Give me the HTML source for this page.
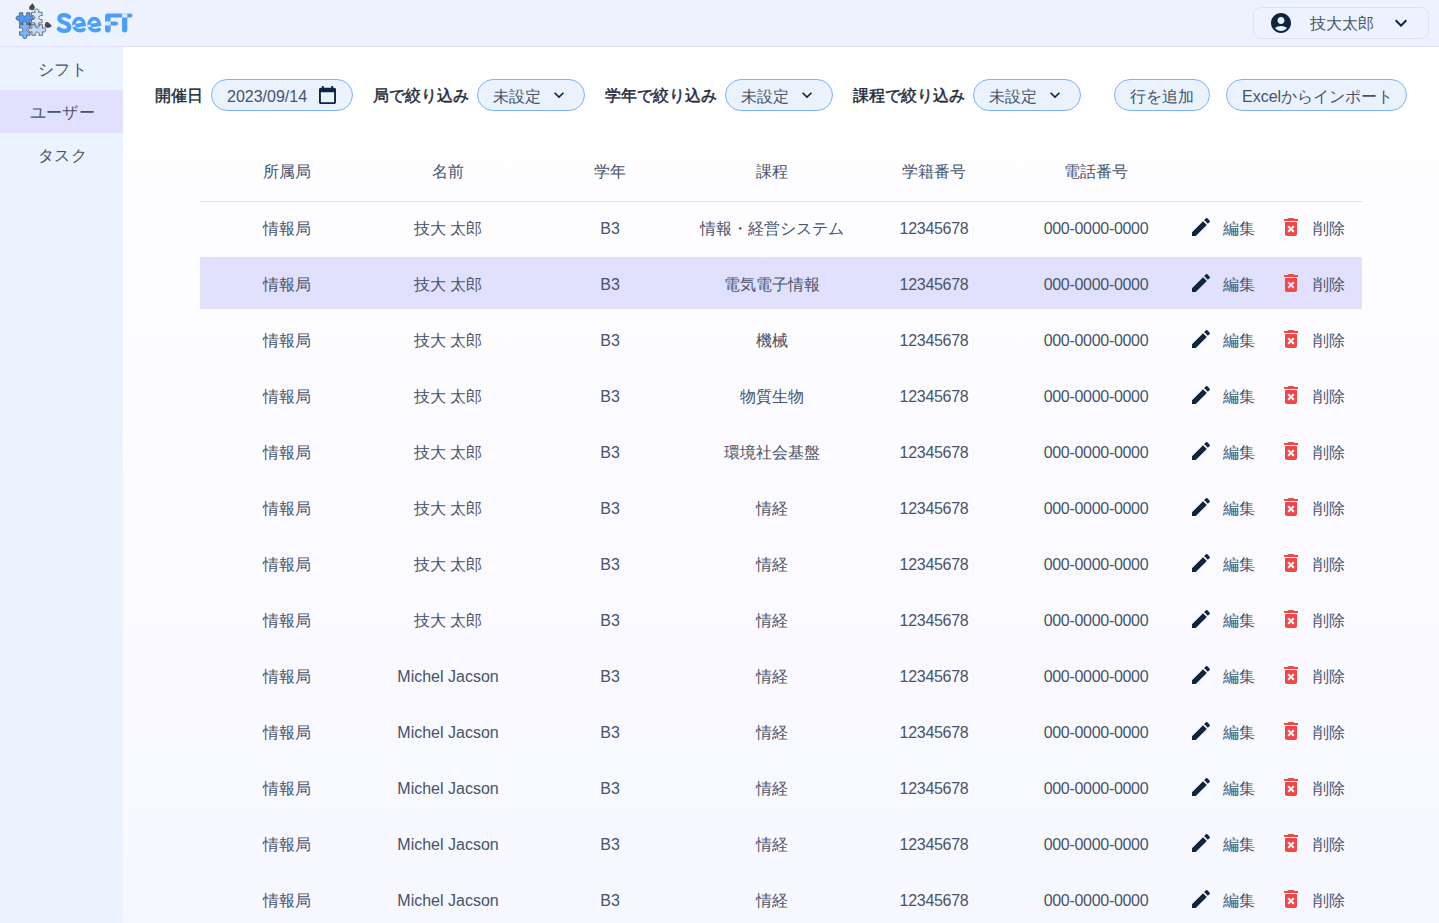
<!DOCTYPE html>
<html lang="ja"><head><meta charset="utf-8">
<style>
*{box-sizing:border-box;margin:0;padding:0}
html,body{width:1439px;height:923px;overflow:hidden}
body{font-family:"Liberation Sans",sans-serif;color:#46536a;background:#fff;position:relative}
#hdr{position:absolute;left:0;top:0;width:1439px;height:47px;background:#ecf3ff;border-bottom:1px solid #e2e0fb}
#side{position:absolute;left:0;top:47px;width:123px;height:876px;background:#ebf3ff}
.nav{position:absolute;left:0;width:123px;height:43px;text-align:center;font-size:16px;color:#46536a;letter-spacing:0.2px}
.nav span{position:absolute;left:0;width:123px;top:12px;line-height:22px;padding-left:2px}
.nav.on{background:#e1e1fd}
#main{position:absolute;left:123px;top:47px;width:1316px;height:876px;background:linear-gradient(#ffffff,#f7f7ff)}
.lab{position:absolute;top:85px;font-size:16px;font-weight:normal;-webkit-text-stroke:0.45px #1e2a3b;color:#1e2a3b;line-height:22px;white-space:nowrap}
.pill{position:absolute;top:79px;height:32px;border:1px solid #7db4f6;background:#eaf2fe;border-radius:16px;font-size:16px;color:#46536a;white-space:nowrap}
.pill span{position:absolute;top:6px;line-height:22px}
.pill svg{position:absolute}
.row{position:absolute;left:200px;width:1162px;height:52px}
.row.hl{background:#e1e1fd}
.cell{position:absolute;top:17px;width:200px;text-align:center;line-height:22px;font-size:16px;color:#46536a;white-space:nowrap}
.ic{position:absolute;top:14px}
.lbl{position:absolute;top:17px;line-height:22px;font-size:16px;color:#46536a}
#thead{position:absolute;left:200px;top:145px;width:1162px;height:57px;border-bottom:1px solid #dedcfa}
#thead .cell{top:16px}
</style></head><body>
<div id="hdr">
  <svg style="position:absolute;left:0;top:0" width="140" height="46" viewBox="0 0 140 46"><path transform="translate(24.7,18.1) rotate(0)" fill="#4a9cf8" stroke="#50555e" stroke-width="0.8" stroke-linejoin="round" d="M-5.3,-5.3 H-1.6800000000000002 A2.1,2.1 0 1 0 1.6800000000000002,-5.3 H5.3 V-1.6800000000000002 A2.1,2.1 0 1 1 5.3,1.6800000000000002 V5.3 H1.6800000000000002 A2.1,2.1 0 1 0 -1.6800000000000002,5.3 H-5.3 V1.6800000000000002 A2.1,2.1 0 1 1 -5.3,-1.6800000000000002 Z"/><path transform="translate(36.8,17.6) rotate(0)" fill="#d6e8fd" stroke="#50555e" stroke-width="0.8" stroke-linejoin="round" d="M-5.3,-5.3 H-1.6800000000000002 A2.1,2.1 0 1 1 1.6800000000000002,-5.3 H5.3 V-1.6800000000000002 A2.1,2.1 0 1 0 5.3,1.6800000000000002 V5.3 H1.6800000000000002 A2.1,2.1 0 1 1 -1.6800000000000002,5.3 H-5.3 V1.6800000000000002 A2.1,2.1 0 1 0 -5.3,-1.6800000000000002 Z"/><path transform="translate(24.8,29.9) rotate(0)" fill="#79b6fb" stroke="#50555e" stroke-width="0.8" stroke-linejoin="round" d="M-5.3,-5.3 H-1.6800000000000002 A2.1,2.1 0 1 1 1.6800000000000002,-5.3 H5.3 V-1.6800000000000002 A2.1,2.1 0 1 0 5.3,1.6800000000000002 V5.3 H1.6800000000000002 A2.1,2.1 0 1 1 -1.6800000000000002,5.3 H-5.3 V1.6800000000000002 A2.1,2.1 0 1 0 -5.3,-1.6800000000000002 Z"/><path transform="translate(37.2,30.0) rotate(0)" fill="#bddcfd" stroke="#50555e" stroke-width="0.8" stroke-linejoin="round" d="M-5.3,-5.3 H-1.6800000000000002 A2.1,2.1 0 1 0 1.6800000000000002,-5.3 H5.3 V-1.6800000000000002 A2.1,2.1 0 1 1 5.3,1.6800000000000002 V5.3 H1.6800000000000002 A2.1,2.1 0 1 0 -1.6800000000000002,5.3 H-5.3 V1.6800000000000002 A2.1,2.1 0 1 1 -5.3,-1.6800000000000002 Z"/><path fill="#4a4a4a" d="M32.5 3.2 C34.5 5.5 35.5 7.5 34.3 9.2 C33.2 10.6 30.2 10.5 29.2 8.8 C28.4 7 30.5 5 32.5 3.2Z"/><path fill="#4a4a4a" d="M51.8 26.2 C49.5 27.6 47.5 28.3 45.8 27.5 C44.3 26.6 44.3 23.4 46 22.3 C47.8 21.4 50 23.8 51.8 26.2Z"/><path fill="#4a4a4a" d="M29.5 22.2 C31 22.5 32 23.6 31.6 25 C31.2 26 29.8 26 29 25.2 C28.3 24.3 28.7 23 29.5 22.2Z"/><g fill="none" stroke="#4b9ef9" stroke-linecap="round"><path stroke-width="4.3" d="M69 16.8 C67.6 15.6 65.6 15.2 64 15.2 C61.2 15.2 59.3 16.5 59.3 18.6 C59.3 21 61.8 21.9 64.3 22.7 C67.4 23.6 69.3 24.8 69.3 27.2 C69.3 29.5 67.2 30.9 64.2 30.9 C62 30.9 60.2 30.2 58.8 28.9"/><path stroke-width="3.7" d="M74.2 25.8 L84 24.4 C83.8 20.9 81.6 18.7 79 18.7 C75.9 18.7 73.9 21.4 73.9 24.8 C73.9 28.3 76.4 30.6 79.6 30.6 C81.2 30.6 82.6 30.2 83.8 29.6"/><path stroke-width="3.7" d="M89.5 25.8 L99.3 24.4 C99.1 20.9 96.9 18.7 94.3 18.7 C91.2 18.7 89.2 21.4 89.2 24.8 C89.2 28.3 91.7 30.6 94.9 30.6 C96.5 30.6 97.9 30.2 99.1 29.6"/></g><g fill="#4b9ef9"><path d="M105 16 a2.5 2.5 0 0 1 2.5 -2.5 H122 V17.6 H110.6 V29.8 a2.6 2.6 0 0 1 -5.6 0Z"/><path d="M110 21.4 H116 a2.05 2.05 0 0 1 0 4.1 H110Z"/><path d="M122 13.5 H130.5 a2.05 2.05 0 0 1 0 4.1 H127.3 V29.8 a2.65 2.65 0 0 1 -5.3 0Z"/></g><rect x="122" y="13.5" width="5.3" height="4.1" fill="#d8e9fe"/><rect x="105" y="21.4" width="5.6" height="4.1" fill="#d8e9fe"/><rect x="72.3" y="24.7" width="3.2" height="2.2" fill="#d8e9fe" transform="rotate(-8 74 25.8)"/><rect x="87.6" y="24.7" width="3.2" height="2.2" fill="#d8e9fe" transform="rotate(-8 89.4 25.8)"/></svg>
  <div style="position:absolute;left:1253px;top:7px;width:176px;height:32px;border:1px solid #e3defb;border-radius:8px"></div>
  <svg style="position:absolute;left:1269px;top:11px" width="24" height="24" viewBox="0 0 24 24"><path fill="#0f2440" d="M12 2C6.48 2 2 6.48 2 12s4.48 10 10 10 10-4.48 10-10S17.52 2 12 2zm0 4c1.93 0 3.5 1.57 3.5 3.5S13.93 13 12 13s-3.5-1.57-3.5-3.5S10.07 6 12 6zm0 14c-2.03 0-4.43-.82-6.14-2.88C7.55 15.8 9.68 15 12 15s4.45.8 6.14 2.12C16.43 19.18 14.03 20 12 20z"/></svg>
  <span style="position:absolute;left:1310px;top:13px;font-size:16px;line-height:22px;color:#46536a">技大太郎</span>
  <svg style="position:absolute;left:1389px;top:11px" width="24" height="24" viewBox="0 0 24 24"><path fill="#0f2440" d="M16.59 8.59 12 13.17 7.41 8.59 6 10l6 6 6-6z"/></svg>
</div>
<div id="side">
  <div class="nav" style="top:0"><span>シフト</span></div>
  <div class="nav on" style="top:43px"><span>ユーザー</span></div>
  <div class="nav" style="top:86px"><span>タスク</span></div>
</div>
<div id="main"></div>
<span class="lab" style="left:155px">開催日</span>
<div class="pill" style="left:211px;width:142px"><span style="left:15px">2023/09/14</span>
  <svg style="left:106.6px;top:5.9px" width="17" height="18" viewBox="3 2 18 20" preserveAspectRatio="none"><path fill="#0f2440" d="M19 4h-1V2h-2v2H8V2H6v2H5c-1.11 0-2 .9-2 2v14c0 1.1.89 2 2 2h14c1.1 0 2-.9 2-2V6c0-1.1-.9-2-2-2zm0 16H5V9h14v11z"/></svg></div>
<span class="lab" style="left:373px">局で絞り込み</span>
<div class="pill" style="left:477px;width:108px"><span style="left:15px">未設定</span><svg style="position:absolute;left:71px;top:5px" width="20" height="20" viewBox="0 0 24 24"><path fill="#0f2440" d="M16.59 8.59 12 13.17 7.41 8.59 6 10l6 6 6-6z"/></svg></div>
<span class="lab" style="left:605px">学年で絞り込み</span>
<div class="pill" style="left:725px;width:108px"><span style="left:15px">未設定</span><svg style="position:absolute;left:71px;top:5px" width="20" height="20" viewBox="0 0 24 24"><path fill="#0f2440" d="M16.59 8.59 12 13.17 7.41 8.59 6 10l6 6 6-6z"/></svg></div>
<span class="lab" style="left:853px">課程で絞り込み</span>
<div class="pill" style="left:973px;width:108px"><span style="left:15px">未設定</span><svg style="position:absolute;left:71px;top:5px" width="20" height="20" viewBox="0 0 24 24"><path fill="#0f2440" d="M16.59 8.59 12 13.17 7.41 8.59 6 10l6 6 6-6z"/></svg></div>
<div class="pill" style="left:1114px;width:96px"><span style="left:15px">行を追加</span></div>
<div class="pill" style="left:1226px;width:181px"><span style="left:15px">Excelからインポート</span></div>
<div id="thead"><span class="cell" style="left:-13.5px">所属局</span><span class="cell" style="left:148px">名前</span><span class="cell" style="left:310px">学年</span><span class="cell" style="left:472px">課程</span><span class="cell" style="left:634px">学籍番号</span><span class="cell" style="left:796px">電話番号</span></div>
<div class="row" style="top:201px"><span class="cell" style="left:-13.5px">情報局</span><span class="cell" style="left:148px">技大 太郎</span><span class="cell" style="left:310px">B3</span><span class="cell" style="left:472px">情報・経営システム</span><span class="cell" style="left:634px;letter-spacing:-0.3px">12345678</span><span class="cell" style="left:796px;letter-spacing:-0.3px">000-0000-0000</span><svg class="ic" style="left:989px" width="24" height="24" viewBox="0 0 24 24"><path fill="#0f2440" d="M3 17.25V21h3.75L17.81 9.94l-3.75-3.75L3 17.25zM20.71 7.04a1 1 0 0 0 0-1.41l-2.34-2.34a1 1 0 0 0-1.41 0l-1.83 1.83 3.75 3.75 1.83-1.83z"/></svg><span class="lbl" style="left:1023px">編集</span><svg class="ic" style="left:1079px" width="24" height="24" viewBox="0 0 24 24"><path fill="#f04848" d="M6 19c0 1.1.9 2 2 2h8c1.1 0 2-.9 2-2V7H6v12zm2.46-7.12l1.41-1.41L12 12.59l2.12-2.12 1.41 1.41L13.41 14l2.12 2.12-1.41 1.41L12 15.41l-2.12 2.12-1.41-1.41L10.59 14l-2.13-2.12zM15.5 4l-1-1h-5l-1 1H5v2h14V4z"/></svg><span class="lbl" style="left:1113px">削除</span></div><div class="row hl" style="top:257px"><span class="cell" style="left:-13.5px">情報局</span><span class="cell" style="left:148px">技大 太郎</span><span class="cell" style="left:310px">B3</span><span class="cell" style="left:472px">電気電子情報</span><span class="cell" style="left:634px;letter-spacing:-0.3px">12345678</span><span class="cell" style="left:796px;letter-spacing:-0.3px">000-0000-0000</span><svg class="ic" style="left:989px" width="24" height="24" viewBox="0 0 24 24"><path fill="#0f2440" d="M3 17.25V21h3.75L17.81 9.94l-3.75-3.75L3 17.25zM20.71 7.04a1 1 0 0 0 0-1.41l-2.34-2.34a1 1 0 0 0-1.41 0l-1.83 1.83 3.75 3.75 1.83-1.83z"/></svg><span class="lbl" style="left:1023px">編集</span><svg class="ic" style="left:1079px" width="24" height="24" viewBox="0 0 24 24"><path fill="#f04848" d="M6 19c0 1.1.9 2 2 2h8c1.1 0 2-.9 2-2V7H6v12zm2.46-7.12l1.41-1.41L12 12.59l2.12-2.12 1.41 1.41L13.41 14l2.12 2.12-1.41 1.41L12 15.41l-2.12 2.12-1.41-1.41L10.59 14l-2.13-2.12zM15.5 4l-1-1h-5l-1 1H5v2h14V4z"/></svg><span class="lbl" style="left:1113px">削除</span></div><div class="row" style="top:313px"><span class="cell" style="left:-13.5px">情報局</span><span class="cell" style="left:148px">技大 太郎</span><span class="cell" style="left:310px">B3</span><span class="cell" style="left:472px">機械</span><span class="cell" style="left:634px;letter-spacing:-0.3px">12345678</span><span class="cell" style="left:796px;letter-spacing:-0.3px">000-0000-0000</span><svg class="ic" style="left:989px" width="24" height="24" viewBox="0 0 24 24"><path fill="#0f2440" d="M3 17.25V21h3.75L17.81 9.94l-3.75-3.75L3 17.25zM20.71 7.04a1 1 0 0 0 0-1.41l-2.34-2.34a1 1 0 0 0-1.41 0l-1.83 1.83 3.75 3.75 1.83-1.83z"/></svg><span class="lbl" style="left:1023px">編集</span><svg class="ic" style="left:1079px" width="24" height="24" viewBox="0 0 24 24"><path fill="#f04848" d="M6 19c0 1.1.9 2 2 2h8c1.1 0 2-.9 2-2V7H6v12zm2.46-7.12l1.41-1.41L12 12.59l2.12-2.12 1.41 1.41L13.41 14l2.12 2.12-1.41 1.41L12 15.41l-2.12 2.12-1.41-1.41L10.59 14l-2.13-2.12zM15.5 4l-1-1h-5l-1 1H5v2h14V4z"/></svg><span class="lbl" style="left:1113px">削除</span></div><div class="row" style="top:369px"><span class="cell" style="left:-13.5px">情報局</span><span class="cell" style="left:148px">技大 太郎</span><span class="cell" style="left:310px">B3</span><span class="cell" style="left:472px">物質生物</span><span class="cell" style="left:634px;letter-spacing:-0.3px">12345678</span><span class="cell" style="left:796px;letter-spacing:-0.3px">000-0000-0000</span><svg class="ic" style="left:989px" width="24" height="24" viewBox="0 0 24 24"><path fill="#0f2440" d="M3 17.25V21h3.75L17.81 9.94l-3.75-3.75L3 17.25zM20.71 7.04a1 1 0 0 0 0-1.41l-2.34-2.34a1 1 0 0 0-1.41 0l-1.83 1.83 3.75 3.75 1.83-1.83z"/></svg><span class="lbl" style="left:1023px">編集</span><svg class="ic" style="left:1079px" width="24" height="24" viewBox="0 0 24 24"><path fill="#f04848" d="M6 19c0 1.1.9 2 2 2h8c1.1 0 2-.9 2-2V7H6v12zm2.46-7.12l1.41-1.41L12 12.59l2.12-2.12 1.41 1.41L13.41 14l2.12 2.12-1.41 1.41L12 15.41l-2.12 2.12-1.41-1.41L10.59 14l-2.13-2.12zM15.5 4l-1-1h-5l-1 1H5v2h14V4z"/></svg><span class="lbl" style="left:1113px">削除</span></div><div class="row" style="top:425px"><span class="cell" style="left:-13.5px">情報局</span><span class="cell" style="left:148px">技大 太郎</span><span class="cell" style="left:310px">B3</span><span class="cell" style="left:472px">環境社会基盤</span><span class="cell" style="left:634px;letter-spacing:-0.3px">12345678</span><span class="cell" style="left:796px;letter-spacing:-0.3px">000-0000-0000</span><svg class="ic" style="left:989px" width="24" height="24" viewBox="0 0 24 24"><path fill="#0f2440" d="M3 17.25V21h3.75L17.81 9.94l-3.75-3.75L3 17.25zM20.71 7.04a1 1 0 0 0 0-1.41l-2.34-2.34a1 1 0 0 0-1.41 0l-1.83 1.83 3.75 3.75 1.83-1.83z"/></svg><span class="lbl" style="left:1023px">編集</span><svg class="ic" style="left:1079px" width="24" height="24" viewBox="0 0 24 24"><path fill="#f04848" d="M6 19c0 1.1.9 2 2 2h8c1.1 0 2-.9 2-2V7H6v12zm2.46-7.12l1.41-1.41L12 12.59l2.12-2.12 1.41 1.41L13.41 14l2.12 2.12-1.41 1.41L12 15.41l-2.12 2.12-1.41-1.41L10.59 14l-2.13-2.12zM15.5 4l-1-1h-5l-1 1H5v2h14V4z"/></svg><span class="lbl" style="left:1113px">削除</span></div><div class="row" style="top:481px"><span class="cell" style="left:-13.5px">情報局</span><span class="cell" style="left:148px">技大 太郎</span><span class="cell" style="left:310px">B3</span><span class="cell" style="left:472px">情経</span><span class="cell" style="left:634px;letter-spacing:-0.3px">12345678</span><span class="cell" style="left:796px;letter-spacing:-0.3px">000-0000-0000</span><svg class="ic" style="left:989px" width="24" height="24" viewBox="0 0 24 24"><path fill="#0f2440" d="M3 17.25V21h3.75L17.81 9.94l-3.75-3.75L3 17.25zM20.71 7.04a1 1 0 0 0 0-1.41l-2.34-2.34a1 1 0 0 0-1.41 0l-1.83 1.83 3.75 3.75 1.83-1.83z"/></svg><span class="lbl" style="left:1023px">編集</span><svg class="ic" style="left:1079px" width="24" height="24" viewBox="0 0 24 24"><path fill="#f04848" d="M6 19c0 1.1.9 2 2 2h8c1.1 0 2-.9 2-2V7H6v12zm2.46-7.12l1.41-1.41L12 12.59l2.12-2.12 1.41 1.41L13.41 14l2.12 2.12-1.41 1.41L12 15.41l-2.12 2.12-1.41-1.41L10.59 14l-2.13-2.12zM15.5 4l-1-1h-5l-1 1H5v2h14V4z"/></svg><span class="lbl" style="left:1113px">削除</span></div><div class="row" style="top:537px"><span class="cell" style="left:-13.5px">情報局</span><span class="cell" style="left:148px">技大 太郎</span><span class="cell" style="left:310px">B3</span><span class="cell" style="left:472px">情経</span><span class="cell" style="left:634px;letter-spacing:-0.3px">12345678</span><span class="cell" style="left:796px;letter-spacing:-0.3px">000-0000-0000</span><svg class="ic" style="left:989px" width="24" height="24" viewBox="0 0 24 24"><path fill="#0f2440" d="M3 17.25V21h3.75L17.81 9.94l-3.75-3.75L3 17.25zM20.71 7.04a1 1 0 0 0 0-1.41l-2.34-2.34a1 1 0 0 0-1.41 0l-1.83 1.83 3.75 3.75 1.83-1.83z"/></svg><span class="lbl" style="left:1023px">編集</span><svg class="ic" style="left:1079px" width="24" height="24" viewBox="0 0 24 24"><path fill="#f04848" d="M6 19c0 1.1.9 2 2 2h8c1.1 0 2-.9 2-2V7H6v12zm2.46-7.12l1.41-1.41L12 12.59l2.12-2.12 1.41 1.41L13.41 14l2.12 2.12-1.41 1.41L12 15.41l-2.12 2.12-1.41-1.41L10.59 14l-2.13-2.12zM15.5 4l-1-1h-5l-1 1H5v2h14V4z"/></svg><span class="lbl" style="left:1113px">削除</span></div><div class="row" style="top:593px"><span class="cell" style="left:-13.5px">情報局</span><span class="cell" style="left:148px">技大 太郎</span><span class="cell" style="left:310px">B3</span><span class="cell" style="left:472px">情経</span><span class="cell" style="left:634px;letter-spacing:-0.3px">12345678</span><span class="cell" style="left:796px;letter-spacing:-0.3px">000-0000-0000</span><svg class="ic" style="left:989px" width="24" height="24" viewBox="0 0 24 24"><path fill="#0f2440" d="M3 17.25V21h3.75L17.81 9.94l-3.75-3.75L3 17.25zM20.71 7.04a1 1 0 0 0 0-1.41l-2.34-2.34a1 1 0 0 0-1.41 0l-1.83 1.83 3.75 3.75 1.83-1.83z"/></svg><span class="lbl" style="left:1023px">編集</span><svg class="ic" style="left:1079px" width="24" height="24" viewBox="0 0 24 24"><path fill="#f04848" d="M6 19c0 1.1.9 2 2 2h8c1.1 0 2-.9 2-2V7H6v12zm2.46-7.12l1.41-1.41L12 12.59l2.12-2.12 1.41 1.41L13.41 14l2.12 2.12-1.41 1.41L12 15.41l-2.12 2.12-1.41-1.41L10.59 14l-2.13-2.12zM15.5 4l-1-1h-5l-1 1H5v2h14V4z"/></svg><span class="lbl" style="left:1113px">削除</span></div><div class="row" style="top:649px"><span class="cell" style="left:-13.5px">情報局</span><span class="cell" style="left:148px">Michel Jacson</span><span class="cell" style="left:310px">B3</span><span class="cell" style="left:472px">情経</span><span class="cell" style="left:634px;letter-spacing:-0.3px">12345678</span><span class="cell" style="left:796px;letter-spacing:-0.3px">000-0000-0000</span><svg class="ic" style="left:989px" width="24" height="24" viewBox="0 0 24 24"><path fill="#0f2440" d="M3 17.25V21h3.75L17.81 9.94l-3.75-3.75L3 17.25zM20.71 7.04a1 1 0 0 0 0-1.41l-2.34-2.34a1 1 0 0 0-1.41 0l-1.83 1.83 3.75 3.75 1.83-1.83z"/></svg><span class="lbl" style="left:1023px">編集</span><svg class="ic" style="left:1079px" width="24" height="24" viewBox="0 0 24 24"><path fill="#f04848" d="M6 19c0 1.1.9 2 2 2h8c1.1 0 2-.9 2-2V7H6v12zm2.46-7.12l1.41-1.41L12 12.59l2.12-2.12 1.41 1.41L13.41 14l2.12 2.12-1.41 1.41L12 15.41l-2.12 2.12-1.41-1.41L10.59 14l-2.13-2.12zM15.5 4l-1-1h-5l-1 1H5v2h14V4z"/></svg><span class="lbl" style="left:1113px">削除</span></div><div class="row" style="top:705px"><span class="cell" style="left:-13.5px">情報局</span><span class="cell" style="left:148px">Michel Jacson</span><span class="cell" style="left:310px">B3</span><span class="cell" style="left:472px">情経</span><span class="cell" style="left:634px;letter-spacing:-0.3px">12345678</span><span class="cell" style="left:796px;letter-spacing:-0.3px">000-0000-0000</span><svg class="ic" style="left:989px" width="24" height="24" viewBox="0 0 24 24"><path fill="#0f2440" d="M3 17.25V21h3.75L17.81 9.94l-3.75-3.75L3 17.25zM20.71 7.04a1 1 0 0 0 0-1.41l-2.34-2.34a1 1 0 0 0-1.41 0l-1.83 1.83 3.75 3.75 1.83-1.83z"/></svg><span class="lbl" style="left:1023px">編集</span><svg class="ic" style="left:1079px" width="24" height="24" viewBox="0 0 24 24"><path fill="#f04848" d="M6 19c0 1.1.9 2 2 2h8c1.1 0 2-.9 2-2V7H6v12zm2.46-7.12l1.41-1.41L12 12.59l2.12-2.12 1.41 1.41L13.41 14l2.12 2.12-1.41 1.41L12 15.41l-2.12 2.12-1.41-1.41L10.59 14l-2.13-2.12zM15.5 4l-1-1h-5l-1 1H5v2h14V4z"/></svg><span class="lbl" style="left:1113px">削除</span></div><div class="row" style="top:761px"><span class="cell" style="left:-13.5px">情報局</span><span class="cell" style="left:148px">Michel Jacson</span><span class="cell" style="left:310px">B3</span><span class="cell" style="left:472px">情経</span><span class="cell" style="left:634px;letter-spacing:-0.3px">12345678</span><span class="cell" style="left:796px;letter-spacing:-0.3px">000-0000-0000</span><svg class="ic" style="left:989px" width="24" height="24" viewBox="0 0 24 24"><path fill="#0f2440" d="M3 17.25V21h3.75L17.81 9.94l-3.75-3.75L3 17.25zM20.71 7.04a1 1 0 0 0 0-1.41l-2.34-2.34a1 1 0 0 0-1.41 0l-1.83 1.83 3.75 3.75 1.83-1.83z"/></svg><span class="lbl" style="left:1023px">編集</span><svg class="ic" style="left:1079px" width="24" height="24" viewBox="0 0 24 24"><path fill="#f04848" d="M6 19c0 1.1.9 2 2 2h8c1.1 0 2-.9 2-2V7H6v12zm2.46-7.12l1.41-1.41L12 12.59l2.12-2.12 1.41 1.41L13.41 14l2.12 2.12-1.41 1.41L12 15.41l-2.12 2.12-1.41-1.41L10.59 14l-2.13-2.12zM15.5 4l-1-1h-5l-1 1H5v2h14V4z"/></svg><span class="lbl" style="left:1113px">削除</span></div><div class="row" style="top:817px"><span class="cell" style="left:-13.5px">情報局</span><span class="cell" style="left:148px">Michel Jacson</span><span class="cell" style="left:310px">B3</span><span class="cell" style="left:472px">情経</span><span class="cell" style="left:634px;letter-spacing:-0.3px">12345678</span><span class="cell" style="left:796px;letter-spacing:-0.3px">000-0000-0000</span><svg class="ic" style="left:989px" width="24" height="24" viewBox="0 0 24 24"><path fill="#0f2440" d="M3 17.25V21h3.75L17.81 9.94l-3.75-3.75L3 17.25zM20.71 7.04a1 1 0 0 0 0-1.41l-2.34-2.34a1 1 0 0 0-1.41 0l-1.83 1.83 3.75 3.75 1.83-1.83z"/></svg><span class="lbl" style="left:1023px">編集</span><svg class="ic" style="left:1079px" width="24" height="24" viewBox="0 0 24 24"><path fill="#f04848" d="M6 19c0 1.1.9 2 2 2h8c1.1 0 2-.9 2-2V7H6v12zm2.46-7.12l1.41-1.41L12 12.59l2.12-2.12 1.41 1.41L13.41 14l2.12 2.12-1.41 1.41L12 15.41l-2.12 2.12-1.41-1.41L10.59 14l-2.13-2.12zM15.5 4l-1-1h-5l-1 1H5v2h14V4z"/></svg><span class="lbl" style="left:1113px">削除</span></div><div class="row" style="top:873px"><span class="cell" style="left:-13.5px">情報局</span><span class="cell" style="left:148px">Michel Jacson</span><span class="cell" style="left:310px">B3</span><span class="cell" style="left:472px">情経</span><span class="cell" style="left:634px;letter-spacing:-0.3px">12345678</span><span class="cell" style="left:796px;letter-spacing:-0.3px">000-0000-0000</span><svg class="ic" style="left:989px" width="24" height="24" viewBox="0 0 24 24"><path fill="#0f2440" d="M3 17.25V21h3.75L17.81 9.94l-3.75-3.75L3 17.25zM20.71 7.04a1 1 0 0 0 0-1.41l-2.34-2.34a1 1 0 0 0-1.41 0l-1.83 1.83 3.75 3.75 1.83-1.83z"/></svg><span class="lbl" style="left:1023px">編集</span><svg class="ic" style="left:1079px" width="24" height="24" viewBox="0 0 24 24"><path fill="#f04848" d="M6 19c0 1.1.9 2 2 2h8c1.1 0 2-.9 2-2V7H6v12zm2.46-7.12l1.41-1.41L12 12.59l2.12-2.12 1.41 1.41L13.41 14l2.12 2.12-1.41 1.41L12 15.41l-2.12 2.12-1.41-1.41L10.59 14l-2.13-2.12zM15.5 4l-1-1h-5l-1 1H5v2h14V4z"/></svg><span class="lbl" style="left:1113px">削除</span></div>
</body></html>
